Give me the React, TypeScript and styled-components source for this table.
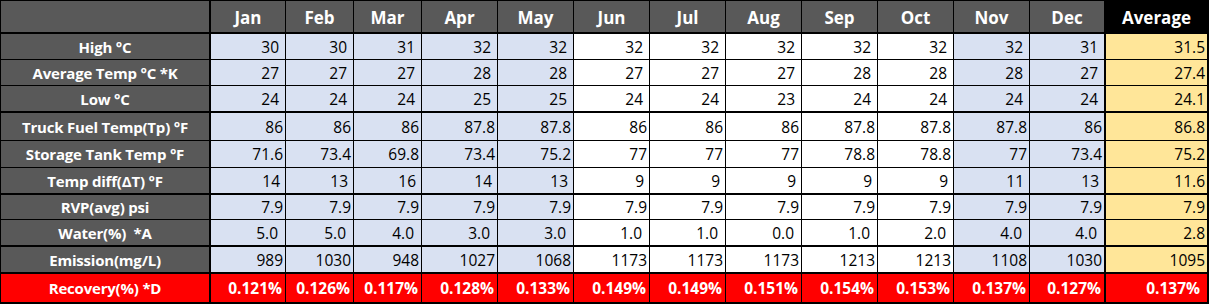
import React from "react";
import styled, { createGlobalStyle } from "styled-components";

const Global = createGlobalStyle`
  html, body { margin: 0; padding: 0; background: #ffffff; }
  body { font-family: "Open Sans", "Noto Sans CJK KR", sans-serif; }
`;

const COLS = "210px 75px 68px 68px repeat(9, 76px) 103px";
const ROW_HEIGHTS = "33px 26px 26px 27px 28px 27px 27px 25px 27px 27px 30px";

const Sheet = styled.div`
  display: grid;
  grid-template-columns: ${COLS};
  grid-template-rows: ${ROW_HEIGHTS};
  width: 1209px;
  box-sizing: border-box;
  border-top: 1px solid #000;
  border-left: 1px solid #000;
`;

const Cell = styled.div<{ $bottom: number; $right: number }>`
  box-sizing: border-box;
  display: flex;
  align-items: center;
  border-right: ${(p) => p.$right}px solid #000;
  border-bottom: ${(p) => p.$bottom}px solid #000;
  overflow: hidden;
  white-space: pre;
`;

const HeaderCell = styled(Cell)<{ $dark?: boolean }>`
  justify-content: center;
  background: ${(p) => (p.$dark ? "#000000" : "#595959")};
  color: #ffffff;
  font-weight: 700;
  font-size: 17px;
  padding-top: 1px;
`;

const LabelCell = styled(Cell)<{ $red?: boolean }>`
  justify-content: center;
  background: ${(p) => (p.$red ? "#ff0000" : "#595959")};
  color: #ffffff;
  font-weight: 700;
  font-size: 15px;
  letter-spacing: -0.2px;
`;

const ValueCell = styled(Cell)<{ $bg: string; $pad: number; $red?: boolean }>`
  justify-content: flex-end;
  padding-right: ${(p) => p.$pad}px;
  background: ${(p) => (p.$red ? "#ff0000" : p.$bg)};
  color: ${(p) => (p.$red ? "#ffffff" : "#000000")};
  font-weight: ${(p) => (p.$red ? 700 : 400)};
  font-size: 15.5px;
`;

const MONTHS = ["Jan", "Feb", "Mar", "Apr", "May", "Jun", "Jul", "Aug", "Sep", "Oct", "Nov", "Dec"];
const BLUE = "#d9e1f2";
const WHITE = "#ffffff";
const YELLOW = "#ffe699";
const monthBg = (i: number) => (i >= 5 && i <= 9 ? WHITE : BLUE);

type Row = {
  label: string;
  values: string[];
  avg: string;
  bottom: number;
  pad: number;
  avgPad: number;
  red?: boolean;
};

const ROWS: Row[] = [
  { label: "High °C", values: ["30", "30", "31", "32", "32", "32", "32", "32", "32", "32", "32", "31"], avg: "31.5", bottom: 1, pad: 6, avgPad: 2 },
  { label: "Average Temp °C *K", values: ["27", "27", "27", "28", "28", "27", "27", "27", "28", "28", "28", "27"], avg: "27.4", bottom: 1, pad: 6, avgPad: 2 },
  { label: "Low °C", values: ["24", "24", "24", "25", "25", "24", "24", "23", "24", "24", "24", "24"], avg: "24.1", bottom: 2, pad: 6, avgPad: 2 },
  { label: "Truck Fuel Temp(Tp) °F", values: ["86", "86", "86", "87.8", "87.8", "86", "86", "86", "87.8", "87.8", "87.8", "86"], avg: "86.8", bottom: 1, pad: 2, avgPad: 2 },
  { label: "Storage Tank Temp °F", values: ["71.6", "73.4", "69.8", "73.4", "75.2", "77", "77", "77", "78.8", "78.8", "77", "73.4"], avg: "75.2", bottom: 1, pad: 2, avgPad: 2 },
  { label: "Temp diff(ΔT) °F", values: ["14", "13", "16", "14", "13", "9", "9", "9", "9", "9", "11", "13"], avg: "11.6", bottom: 2, pad: 5, avgPad: 2 },
  { label: "RVP(avg) psi", values: Array(12).fill("7.9"), avg: "7.9", bottom: 1, pad: 2, avgPad: 2 },
  { label: "Water(%)  *A", values: ["5.0", "5.0", "4.0", "3.0", "3.0", "1.0", "1.0", "0.0", "1.0", "2.0", "4.0", "4.0"], avg: "2.8", bottom: 2, pad: 7, avgPad: 2 },
  { label: "Emission(mg/L)", values: ["989", "1030", "948", "1027", "1068", "1173", "1173", "1173", "1213", "1213", "1108", "1030"], avg: "1095", bottom: 2, pad: 2, avgPad: 2 },
  { label: "Recovery(%) *D", values: ["0.121%", "0.126%", "0.117%", "0.128%", "0.133%", "0.149%", "0.149%", "0.151%", "0.154%", "0.153%", "0.137%", "0.127%"], avg: "0.137%", bottom: 2, pad: 3, avgPad: 7, red: true },
];

export default function App() {
  return (
    <>
      <Global />
      <Sheet>
        <HeaderCell $bottom={2} $right={2} />
        {MONTHS.map((m, i) => (
          <HeaderCell key={m} $bottom={2} $right={i === 11 ? 2 : 1}>
            {m}
          </HeaderCell>
        ))}
        <HeaderCell $bottom={2} $right={2} $dark>
          Average
        </HeaderCell>
        {ROWS.map((r) => (
          <React.Fragment key={r.label}>
            <LabelCell $bottom={r.bottom} $right={2} $red={r.red}>
              {r.label}
            </LabelCell>
            {r.values.map((v, i) => (
              <ValueCell
                key={i}
                $bottom={r.bottom}
                $right={i === 11 ? 2 : 1}
                $bg={monthBg(i)}
                $pad={r.pad}
                $red={r.red}
              >
                {v}
              </ValueCell>
            ))}
            <ValueCell $bottom={r.bottom} $right={2} $bg={YELLOW} $pad={r.avgPad} $red={r.red}>
              {r.avg}
            </ValueCell>
          </React.Fragment>
        ))}
      </Sheet>
    </>
  );
}
